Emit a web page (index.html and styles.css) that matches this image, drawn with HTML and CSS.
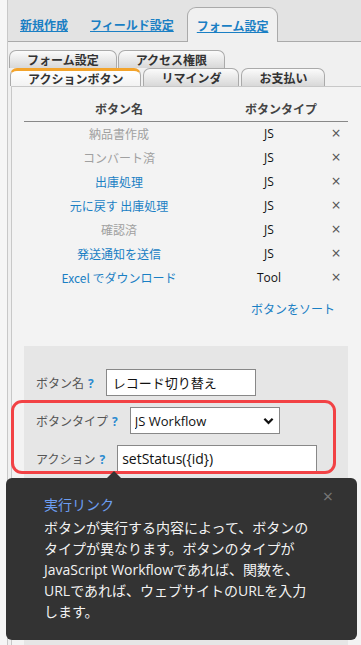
FILE: index.html
```html
<!DOCTYPE html>
<html>
<head>
    <title>フォーム設定 - アクションボタン</title>
    <link rel="stylesheet" href="styles.css">
</head>
<body>
    <div class="page">
        <div class="main-tabs">
            <a class="main-tab" href="#">新規作成</a>
            <a class="main-tab" href="#">フィールド設定</a>
            <a class="main-tab active" href="#">フォーム設定</a>
        </div>

        <div class="main-body">
            <div class="sub-tabs">
                <div class="sub-row">
                    <span class="sub-tab">フォーム設定</span>
                    <span class="sub-tab">アクセス権限</span>
                </div>
                <div class="sub-row second">
                    <span class="sub-tab active">アクションボタン</span>
                    <span class="sub-tab">リマインダ</span>
                    <span class="sub-tab">お支払い</span>
                </div>
            </div>

            <div class="panel">
                <table class="button-table">
                    <colgroup>
                        <col class="col-name">
                        <col class="col-type">
                        <col class="col-del">
                    </colgroup>
                    <thead>
                        <tr>
                            <th>ボタン名</th>
                            <th colspan="2">ボタンタイプ</th>
                        </tr>
                    </thead>
                    <tbody>
                        <tr><td class="name off">納品書作成</td><td>JS</td><td class="del">×</td></tr>
                        <tr><td class="name off">コンバート済</td><td>JS</td><td class="del">×</td></tr>
                        <tr><td class="name">出庫処理</td><td>JS</td><td class="del">×</td></tr>
                        <tr><td class="name">元に戻す 出庫処理</td><td>JS</td><td class="del">×</td></tr>
                        <tr><td class="name off">確認済</td><td>JS</td><td class="del">×</td></tr>
                        <tr><td class="name">発送通知を送信</td><td>JS</td><td class="del">×</td></tr>
                        <tr><td class="name">Excel でダウンロード</td><td>Tool</td><td class="del">×</td></tr>
                    </tbody>
                </table>

                <div class="sort-link"><a href="#">ボタンをソート</a></div>

                <div class="edit-box">
                    <div class="field">
                        <label>ボタン名<span class="help">?</span></label>
                        <input class="text-input name-input" type="text" value="レコード切り替え">
                    </div>
                    <div class="field">
                        <label>ボタンタイプ<span class="help">?</span></label>
                        <div class="select-wrap">
                            <select class="type-select">
                                <option>JS Workflow</option>
                                <option>URL</option>
                                <option>Tool</option>
                            </select>
                            <svg class="chevron" viewBox="0 0 12 8">
                                <path d="M1.5 1.5 L6 6 L10.5 1.5" fill="none" stroke="#111" stroke-width="2.4"/>
                            </svg>
                        </div>
                    </div>
                    <div class="field">
                        <label>アクション<span class="help">?</span></label>
                        <input class="text-input action-input" type="text" value="setStatus({id})">
                    </div>
                </div>
            </div>
        </div>
    </div>

    <!-- annotation around the type / action rows -->
    <div class="highlight"></div>

    <div class="tooltip">
        <span class="tooltip-close">×</span>
        <div class="tooltip-title">実行リンク</div>
        <p class="tooltip-text">ボタンが実行する内容によって、ボタンのタイプが異なります。ボタンのタイプがJavaScript Workflowであれば、関数を、URLであれば、ウェブサイトのURLを入力します。</p>
    </div>
</body>
</html>
```

FILE: styles.css
```css
* {
    box-sizing: border-box;
}

body {
    margin: 0;
    width: 361px;
    height: 645px;
    overflow: hidden;
    position: relative;
    font-family: 'Open Sans', 'Noto Sans CJK JP', sans-serif;
    color: #222;
    background: #f6f6f6;
}

a {
    color: #1a7fc4;
}

.page {
    margin-left: 7px;
    height: 645px;
    border-left: 1px solid #c8c8c8;
    display: flex;
    flex-direction: column;
}

/* Top level tabs */
.main-tabs {
    flex-shrink: 0;
    display: flex;
    align-items: flex-end;
    height: 42px;
    padding-left: 3px;
    background: #e3e3e3;
    border-bottom: 1px solid #aaa;
}

.main-tab {
    display: flex;
    align-items: center;
    height: 34px;
    padding: 1px 9px 0;
    margin-right: 4px;
    font-family: 'Noto Sans CJK JP', sans-serif;
    font-size: 12px;
    font-weight: bold;
    color: #1a7fc4;
    text-decoration: underline;
}

.main-tab.active {
    height: 35px;
    margin-bottom: -1px;
    background: #f0f0f0;
    border: 1px solid #aaa;
    border-bottom: none;
    border-radius: 9px 9px 0 0;
}

.main-body {
    flex: 1;
    min-height: 0;
    display: flex;
    flex-direction: column;
    background: #f0f0f0;
}

/* Sub tabs */
.sub-tabs {
    flex-shrink: 0;
    padding-top: 8px;
}

.sub-row {
    display: flex;
    gap: 1px;
    padding-left: 1px;
}

.sub-row.second {
    padding-left: 2px;
    gap: 2px;
}

.sub-tab {
    height: 18px;
    padding: 0 17px;
    font-family: 'Noto Sans CJK JP', sans-serif;
    font-size: 12px;
    font-weight: bold;
    line-height: 17px;
    color: #333;
    background: linear-gradient(#fbfbfb, #d8d8d8);
    border: 1px solid #aaa;
    border-bottom: none;
    border-radius: 7px 7px 0 0;
}

.sub-tab.active {
    line-height: 15px;
    background: linear-gradient(#ffffff, #f2f2f2);
    border-top: 3px solid #f3a42c;
}

/* Content panel */
.panel {
    flex: 1;
    min-height: 0;
    display: flex;
    flex-direction: column;
    margin-left: 3px;
    padding: 9px 13px 0 12px;
    background: #f3f3f3;
    border-top: 1px solid #c8c8c8;
    border-left: 1px solid #c8c8c8;
}

.button-table {
    width: 100%;
    border-collapse: collapse;
    font-family: 'Noto Sans CJK JP', sans-serif;
    font-size: 12px;
}

.col-name { width: 190px; }
.col-type { width: 110px; }
.col-del { width: 24px; }

.button-table th {
    height: 25px;
    padding: 0;
    font-weight: bold;
    color: #444;
    border-bottom: 1px solid #888;
}

.button-table td {
    height: 24px;
    padding: 0;
    text-align: center;
    color: #111;
    font-family: 'Open Sans', 'Noto Sans CJK JP', sans-serif;
}

.button-table td.name {
    font-family: 'Noto Sans CJK JP', sans-serif;
    color: #1a7fc4;
}

.button-table td.name.off {
    color: #a0a0a0;
}

.button-table td.del {
    font-size: 16px;
    color: #555;
}

.sort-link {
    flex-shrink: 0;
    height: 30px;
    padding: 10px 13px 0 0;
    text-align: right;
    font-family: 'Noto Sans CJK JP', sans-serif;
    font-size: 12px;
    line-height: 20px;
}

.sort-link a {
    text-decoration: none;
}

/* Button edit form */
.edit-box {
    flex: 1;
    margin-top: 27px;
    padding: 23px 12px 0;
    display: flex;
    flex-direction: column;
    gap: 11px;
    background: #e6e6e6;
}

.field {
    display: flex;
    align-items: center;
    gap: 12px;
}

.field label {
    font-family: 'Noto Sans CJK JP', sans-serif;
    font-size: 12px;
    color: #555;
}

.help {
    margin-left: 4px;
    font-family: 'Open Sans', sans-serif;
    font-weight: bold;
    color: #2a8ad0;
}

.text-input,
.type-select {
    height: 27px;
    margin: 0;
    border: 1px solid #888;
    border-radius: 0;
    background: #fff;
    color: #111;
    font-family: 'Open Sans', 'Noto Sans CJK JP', sans-serif;
    font-size: 13px;
}

.name-input {
    width: 150px;
    padding: 0 6px;
    font-family: 'Noto Sans CJK JP', sans-serif;
}

.action-input {
    width: 200px;
    padding: 0 4px;
    font-size: 14px;
}

.select-wrap {
    position: relative;
}

.type-select {
    width: 150px;
    padding: 0 4px;
    -webkit-appearance: none;
    appearance: none;
}

.chevron {
    position: absolute;
    right: 6px;
    top: 10px;
    width: 11px;
    height: 8px;
    pointer-events: none;
}

.highlight {
    position: absolute;
    left: 11px;
    top: 400px;
    width: 325px;
    height: 74px;
    border: 3px solid #f24245;
    border-radius: 11px;
}

/* Help popup */
.tooltip {
    position: absolute;
    left: 6px;
    top: 478px;
    width: 351px;
    height: 162px;
    padding: 16px 40px 0 38px;
    background: #333;
    border-radius: 6px;
    color: #f2f2f2;
    font-family: 'Open Sans', 'Noto Sans CJK JP', sans-serif;
    font-size: 14px;
    line-height: 21px;
}

.tooltip::before {
    content: '';
    position: absolute;
    left: 101px;
    top: -7px;
    border: 7px solid transparent;
    border-top: none;
    border-bottom-color: #333;
}

.tooltip-title {
    color: #6d9ef2;
    margin-bottom: 2px;
}

.tooltip-text {
    margin: 0;
    width: 272px;
}

.tooltip-close {
    position: absolute;
    right: 24px;
    top: 8px;
    font-size: 18px;
    color: #777;
}
```
